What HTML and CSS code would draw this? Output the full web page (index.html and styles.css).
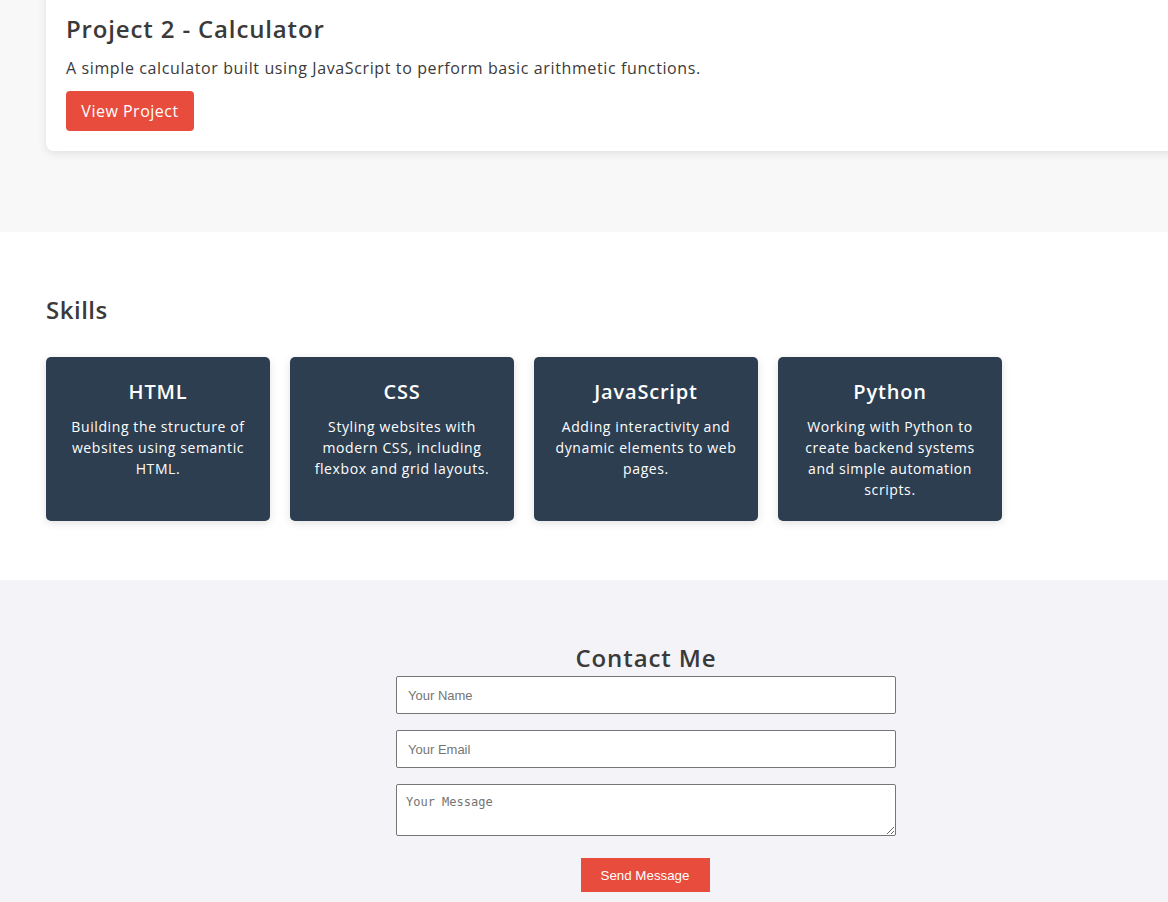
FILE: index.html
```html
<!DOCTYPE html>
<html lang="en">
<head>
<meta charset="utf-8">
<title>Portfolio</title>
<link rel="stylesheet" href="styles.css">
</head>
<body>
<section class="projects">
  <div class="project-card">
    <h3 class="project-title">Project 2 - Calculator</h3>
    <p class="project-desc">A simple calculator built using JavaScript to perform basic arithmetic functions.</p>
    <a class="btn-view" href="#">View Project</a>
  </div>
</section>

<section class="skills">
  <h2 class="section-title">Skills</h2>
  <div class="skill-grid">
    <div class="skill-card">
      <h3>HTML</h3>
      <p>Building the structure of websites using semantic HTML.</p>
    </div>
    <div class="skill-card">
      <h3>CSS</h3>
      <p>Styling websites with modern CSS, including flexbox and grid layouts.</p>
    </div>
    <div class="skill-card">
      <h3>JavaScript</h3>
      <p>Adding interactivity and dynamic elements to web pages.</p>
    </div>
    <div class="skill-card">
      <h3>Python</h3>
      <p>Working with Python to create backend systems and simple automation scripts.</p>
    </div>
  </div>
</section>

<section class="contact">
  <h2 class="contact-title">Contact Me</h2>
  <form class="contact-form">
    <input class="field" type="text" placeholder="Your Name">
    <input class="field field-email" type="email" placeholder="Your Email">
    <textarea class="field-msg" placeholder="Your Message"></textarea>
    <button class="btn-send" type="button">Send Message</button>
  </form>
</section>
</body>
</html>
```

FILE: styles.css
```css
html, body {
  margin: 0;
  padding: 0;
  overflow-x: hidden;
}
body {
  font-family: "Open Sans", "DejaVu Sans", sans-serif;
  color: #333;
  background: #f4f4f8;
}

.projects {
  background: #f8f8f8;
  padding: 0 0 81px 46px;
  overflow: hidden;
}
.project-card {
  margin-top: -9px;
  width: 1200px;
  background: #fff;
  border-radius: 8px;
  box-shadow: 0 2px 10px rgba(0,0,0,0.1);
  padding: 20px;
  box-sizing: border-box;
}
.project-title {
  margin: 0 0 9px;
  font-size: 24px;
  line-height: 36px;
  font-weight: 600;
  letter-spacing: 0.85px;
  color: #3a3a3a;
}
.project-desc {
  margin: 0 0 11px;
  font-size: 16px;
  line-height: 24px;
  letter-spacing: 0.62px;
  color: #3a3a3a;
}
.btn-view {
  display: inline-block;
  width: 128px;
  height: 40px;
  line-height: 40px;
  text-align: center;
  background: #e74c3c;
  color: #fff;
  text-decoration: none;
  border-radius: 4px;
  font-size: 16px;
  letter-spacing: 0.5px;
  box-sizing: border-box;
}

.skills {
  background: #fff;
  padding: 60px 46px 59px;
}
.section-title {
  margin: 0 0 29px;
  font-size: 24px;
  line-height: 36px;
  font-weight: 600;
  letter-spacing: 0.5px;
  color: #3a3a3a;
}
.skill-grid {
  display: grid;
  grid-template-columns: repeat(4, 224px);
  gap: 20px;
}
.skill-card {
  background: #2c3e50;
  color: #fff;
  border-radius: 5px;
  padding: 20px;
  text-align: center;
  box-shadow: 0 2px 8px rgba(0,0,0,0.12);
  height: 164px;
  box-sizing: border-box;
}
.skill-card h3 {
  margin: 0 0 9px;
  font-size: 20px;
  line-height: 30px;
  font-weight: 600;
  letter-spacing: 0.8px;
}
.skill-card p {
  margin: 0;
  font-size: 14px;
  line-height: 21px;
  letter-spacing: 0.6px;
}

.contact {
  background: #f4f4f8;
  padding: 60px 0 10px 124px;
  display: flex;
  flex-direction: column;
  align-items: center;
}
.contact-title {
  margin: 0;
  font-size: 24px;
  line-height: 36px;
  font-weight: 600;
  letter-spacing: 0.9px;
  color: #3a3a3a;
}
.contact-form {
  width: 500px;
  display: flex;
  flex-direction: column;
  align-items: center;
}
.field, .field-msg {
  width: 500px;
  box-sizing: border-box;
  border: 1px solid #767676;
  border-radius: 2px;
  background: #fff;
  margin: 0 0 16px;
}
.field {
  height: 38px;
  padding: 0 11px;
  font-family: "Liberation Sans", Arial, sans-serif;
  font-size: 13px;
}
.field::placeholder, .field-msg::placeholder {
  color: #757575;
}
.field-msg {
  height: 52px;
  padding: 10px 9px;
  font-family: "DejaVu Sans Mono", "Liberation Mono", monospace;
  font-size: 12px;
  margin-bottom: 22px;
  resize: vertical;
}
.btn-send {
  width: 129px;
  height: 34px;
  border: none;
  margin-left: -2px;
  background: #e74c3c;
  color: #fff;
  font-family: "Liberation Sans", Arial, sans-serif;
  font-size: 13.333px;
  padding: 0;
}
```
